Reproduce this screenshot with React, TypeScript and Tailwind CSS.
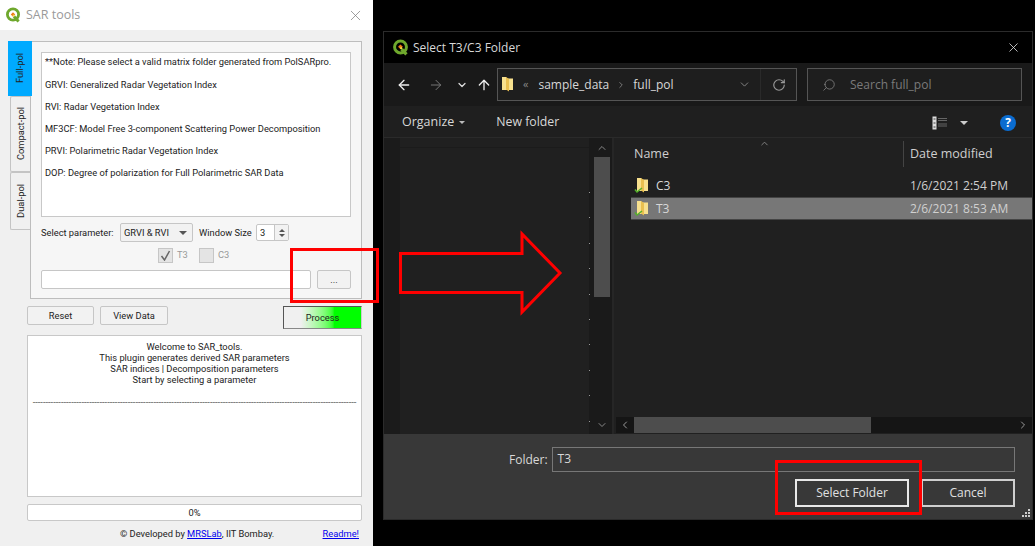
import React from 'react';
import { ArrowLeft, ArrowRight, ArrowUp, ChevronDown, ChevronLeft, ChevronRight, ChevronUp, RotateCw, Search, X } from 'lucide-react';

const QgisLogo = ({ size }: { size: number }) => (
  <svg width={size} height={size} viewBox="0 0 16 16" className="shrink-0">
    <circle cx="8" cy="7.5" r="5.6" fill="none" stroke="#6fa82d" strokeWidth="2.8" />
    <path d="M9 9.5l4.6 5" stroke="#6fa82d" strokeWidth="3" />
    <rect x="6.4" y="5.8" width="3.2" height="3.2" fill="#ee7913" transform="rotate(45 8 7.4)" />
    <circle cx="8.6" cy="8.6" r="1" fill="#f4d84a" />
  </svg>
);

const FolderIcon = ({ check }: { check?: boolean }) => (
  <svg width="16" height="17" viewBox="0 0 16 17" className="shrink-0">
    <path d="M3 1h4l1 1.500h6v11.500h-11z" fill="#f7e08e" />
    <path d="M7 1l3 2v12.500l-3 -2z" fill="#e9bf50" />
    {check && <path d="M1 12.500l2 2.500l5 -4" fill="none" stroke="#55b02c" strokeWidth="1.600" />}
  </svg>
);

const TabItem = ({ label, h, active }: { label: string; h: string; active?: boolean }) => (
  <div
    className={
      active
        ? `${h} relative z-10 w-[24px] bg-[#00aaff] flex items-center justify-center`
        : `${h} ml-[2px] w-[20px] bg-[#f0f0f0] border border-r-0 border-[#c4c4c4] rounded-l-[2px] flex items-center justify-center`
    }
  >
    <span className="[writing-mode:vertical-rl] rotate-180 text-[9.300px] text-[#222]">{label}</span>
  </div>
);

const QtButton = ({ label, w }: { label: string; w: string }) => (
  <button className={`${w} h-[19px] bg-[#f2f2f2] border border-[#c6c6c6] rounded-[2px] text-[9.300px] text-[#222] leading-none`}>
    {label}
  </button>
);

const notes = [
  '**Note: Please select a valid matrix folder generated from PolSARpro.',
  'GRVI: Generalized Radar Vegetation Index',
  'RVI: Radar Vegetation Index',
  'MF3CF: Model Free 3-component Scattering Power Decomposition',
  'PRVI: Polarimetric Radar Vegetation Index',
  'DOP: Degree of polarization for Full Polarimetric SAR Data',
];

const SarPanel = () => (
  <div className="w-[373px] h-[546px] shrink-0 bg-[#f0f0f0] flex flex-col font-['Roboto',sans-serif]">
    <div className="h-[30px] bg-white flex items-center pl-[5px] pr-[9px] font-['Open_Sans',sans-serif]">
      <QgisLogo size={16} />
      <span className="ml-[5px] text-[12.500px] text-[#9a9a9a]">SAR tools</span>
      <X size={17} strokeWidth={1} className="ml-auto text-[#777]" />
    </div>

    <div className="flex pl-[8px] pt-[11px]">
      <div className="flex flex-col w-[22px]">
        <TabItem label="Full-pol" h="h-[55px]" active />
        <TabItem label="Compact-pol" h="h-[76px]" />
        <TabItem label="Dual-pol" h="h-[58px]" />
      </div>
      <div className="w-[332px] h-[258px] bg-[#f6f6f6] border border-[#bdbdbd] px-[10px] pt-[10px]">
        <div className="h-[165px] bg-white border border-[#c8c8c8] px-[3px] text-[9.300px] text-[#222] leading-[22px]">
          <div className="-mt-[2px]">
            {notes.map((n) => (
              <div key={n} className="whitespace-nowrap first:pb-[1px]">{n}</div>
            ))}
          </div>
        </div>
        <div className="flex items-center mt-[6px] h-[19px] text-[9.300px] text-[#222]">
          <span className="w-[79px] whitespace-nowrap">Select parameter:</span>
          <div className="w-[73px] h-[19px] bg-[#f2f2f2] border border-[#c6c6c6] rounded-[2px] flex items-center pl-[3px]">
            <span>GRVI &amp; RVI</span>
            <span className="ml-auto mr-[5px] w-0 h-0 border-x-[4px] border-x-transparent border-t-[4px] border-t-[#555]" />
          </div>
          <span className="ml-[6px]">Window Size</span>
          <div className="ml-auto mr-[62px] w-[33px] h-[17px] bg-white border border-[#c6c6c6] rounded-[2px] flex items-center pl-[3px]">
            <span className="flex-1">3</span>
            <div className="w-[14px] h-full border-l border-[#c6c6c6] bg-[#f2f2f2] flex flex-col items-center justify-center gap-[2px]">
              <span className="w-0 h-0 border-x-[3px] border-x-transparent border-b-[3px] border-b-[#555]" />
              <span className="w-0 h-0 border-x-[3px] border-x-transparent border-t-[3px] border-t-[#555]" />
            </div>
          </div>
        </div>
        <div className="flex items-center mt-[5px] h-[16px] pl-[117px] text-[9.300px] text-[#999]">
          <span className="w-[15px] h-[15px] bg-[#e4e4e4] border border-[#c6c6c6] flex items-center justify-center">
            <svg width="11" height="11" viewBox="0 0 11 11">
              <path d="M1.500 6l3 4l5 -9" fill="none" stroke="#666" strokeWidth="1.500" />
            </svg>
          </span>
          <span className="ml-[4px] w-[22px]">T3</span>
          <span className="w-[15px] h-[15px] bg-[#e4e4e4] border border-[#c6c6c6]" />
          <span className="ml-[4px]">C3</span>
        </div>
        <div className="flex items-center mt-[7px] gap-[6px]">
          <div className="w-[270px] h-[19px] bg-white border border-[#c6c6c6] rounded-[2px]" />
          <QtButton label="..." w="w-[34px]" />
        </div>
      </div>
    </div>

    <div className="flex items-start mt-[7px] pl-[27px] gap-[6px]">
      <QtButton label="Reset" w="w-[67px]" />
      <QtButton label="View Data" w="w-[68px]" />
      <button className="ml-[109px] w-[79px] h-[23px] border border-[#555] border-r-[#ccc] border-b-[#888] bg-gradient-to-r from-[#f0f0f0] from-[22%] to-[#00ff00] to-[65%] text-[9.300px] text-[#222] leading-none">
        Process
      </button>
    </div>

    <div className="ml-[27px] mt-[6px] w-[335px] h-[162px] bg-white border border-[#c8c8c8] pt-[5px] text-[9.300px] text-[#222] leading-[11px] text-center overflow-hidden">
      <div>Welcome to SAR_tools.</div>
      <div>This plugin generates derived SAR parameters</div>
      <div>SAR indices | Decomposition parameters</div>
      <div>Start by selecting a parameter</div>
      <div className="mt-[11px] whitespace-nowrap text-[#555]">
        {'-'.repeat(126)}
      </div>
    </div>

    <div className="ml-[27px] mt-[7px] w-[335px] h-[17px] bg-white border border-[#c8c8c8] rounded-[2px] flex items-center justify-center text-[9.300px] text-[#222]">
      0%
    </div>

    <div className="mt-[5px] h-[16px] text-[9.300px] text-[#222] pl-[120px] flex items-center">
      <span>© Developed by <span className="text-[#0000ee] underline">MRSLab</span>, IIT Bombay.</span>
      <span className="ml-auto mr-[14px] text-[#0000ee] underline">Readme!</span>
    </div>
  </div>
);

const FileRow = ({ name, date, selected }: { name: string; date: string; selected?: boolean }) => (
  <div className={`h-[23px] flex items-center ${selected ? 'bg-[#777] border-y border-[#444]' : ''}`}>
    <div className="w-[279px] pl-[3px] flex items-center gap-[6px]">
      <FolderIcon check />
      <span className="text-[12px] text-[#d8d8d8]">{name}</span>
    </div>
    <span className={`text-[12px] ${selected ? 'text-[#d0d0d0]' : 'text-[#cfcfcf]'}`}>{date}</span>
  </div>
);

const treeDots = [0, 1, 2, 3, 4, 5, 6, 7, 8, 9];

const FolderDialog = () => (
  <div className="w-[650px] h-[489px] bg-[#202020] border border-[#2b2b2b] flex flex-col">
    {/* title bar */}
    <div className="h-[31px] bg-black flex items-center pl-[8px] pr-[11px]">
      <QgisLogo size={17} />
      <span className="ml-[4px] text-[12px] text-[#d8d8d8]">Select T3/C3 Folder</span>
      <X size={15} strokeWidth={1.300} className="ml-auto text-[#e0e0e0]" />
    </div>

    {/* address row */}
    <div className="h-[43px] bg-[#191919] flex items-center">
      <ArrowLeft size={16} strokeWidth={2} className="ml-[12px] text-[#eee]" />
      <ArrowRight size={16} strokeWidth={1.500} className="ml-[16px] text-[#777]" />
      <ChevronDown size={12} strokeWidth={2.500} className="ml-[12px] text-[#ddd]" />
      <ArrowUp size={16} strokeWidth={2} className="ml-[8px] text-[#eee]" />
      <div className="ml-[5px] w-[300px] h-[33px] border border-[#555] bg-[#1e1e1e] flex items-center pl-[1px]">
        <FolderIcon />
        <span className="ml-[8px] text-[11px] text-[#888]">«</span>
        <span className="ml-[10px] text-[12px] text-[#d8d8d8]">sample_data</span>
        <ChevronRight size={10} className="ml-[7px] text-[#888]" />
        <span className="ml-[7px] text-[12px] text-[#d8d8d8]">full_pol</span>
        <ChevronDown size={13} strokeWidth={1.500} className="ml-auto mr-[2px] text-[#999]" />
        <div className="w-[36px] h-full ml-[7px] border-l border-[#2a2a2a] flex items-center justify-center">
          <RotateCw size={14} className="text-[#999]" />
        </div>
      </div>
      <div className="ml-[10px] w-[215px] h-[33px] border border-[#555] bg-[#1e1e1e] flex items-center pl-[14px]">
        <Search size={14} strokeWidth={1.300} className="-scale-x-100 text-[#888]" />
        <span className="ml-[14px] text-[12px] text-[#7a7a7a]">Search full_pol</span>
      </div>
    </div>

    {/* toolbar */}
    <div className="h-[32px] bg-[#1f1f1f] border-b border-[#2a2a2a] flex items-center pt-[2px] pl-[18px] pr-[16px] text-[12px] text-[#d8d8d8]">
      <span className="text-[12.500px]">Organize</span>
      <span className="ml-[5px] w-0 h-0 border-x-[3px] border-x-transparent border-t-[3px] border-t-[#bbb]" />
      <span className="ml-[31px] text-[12.300px]">New folder</span>
      <svg width="16" height="14" viewBox="0 0 16 14" className="ml-auto">
        <rect x="0.500" y="0.500" width="4" height="13" fill="#ddd" />
        <path d="M1.500 3h2M1.500 7h2M1.500 11h2" stroke="#444" />
        <path d="M6 2.500h9M6 4.500h9M6 8h9M6 10h9" stroke="#666" />
      </svg>
      <span className="ml-[12px] w-0 h-0 border-x-[4px] border-x-transparent border-t-[4px] border-t-[#ccc]" />
      <span className="ml-[32px] w-[16px] h-[16px] rounded-full bg-[#0a6cd0] text-white text-[12px] font-bold flex items-center justify-center leading-none">?</span>
    </div>

    {/* panes */}
    <div className="h-[296px] flex">
      <div className="w-[230px] flex">
        <div className="w-[16px] bg-[#1b1b1b]" />
        <div className="w-[189px] bg-[#202020] mt-[9px] border-t border-[#1b1b1b]" />
        <div className="w-[1px] bg-[#1a1a1a] pt-[54px] flex flex-col gap-[24.400px]">
          {treeDots.map((d) => (
            <span key={d} className="w-[1px] h-[1px] bg-[#999]" />
          ))}
        </div>
        <div className="w-[22px] bg-[#1a1a1a] pl-[4px] flex flex-col items-start">
          <ChevronUp size={12} className="ml-[2px] mt-[4px] text-[#888]" />
          <div className="w-[16px] h-[140px] mt-[3px] bg-[#4d4d4d]" />
          <ChevronDown size={12} className="ml-[2px] mt-auto mb-[3px] text-[#888]" />
        </div>
        <div className="w-[2px] bg-[#262626]" />
      </div>
      <div className="flex-1 flex flex-col pl-[17px]">
        <div className="h-[30px] flex items-center relative pt-[2px]">
          <span className="pl-[3px] w-[272px] text-[12.500px] text-[#cfcfcf]">Name</span>
          <div className="w-px h-[26px] bg-[#444]" />
          <span className="ml-[6px] text-[12.500px] text-[#cfcfcf]">Date modified</span>
          <ChevronUp size={11} className="absolute left-[128px] top-0 text-[#888]" />
        </div>
        <div className="mt-[6px]">
          <FileRow name="C3" date="1/6/2021 2:54 PM" />
          <FileRow name="T3" date="2/6/2021 8:53 AM" selected />
        </div>
        <div className="mt-auto -ml-[15px] h-[16px] mb-[1px] flex items-center bg-[#151515]">
          <div className="w-[18px] flex justify-center">
            <ChevronLeft size={12} className="text-[#999]" />
          </div>
          <div className="w-[237px] h-full bg-[#4d4d4d]" />
          <ChevronRight size={12} className="ml-auto mr-[3px] text-[#999]" />
        </div>
      </div>
    </div>

    {/* footer */}
    <div className="relative flex-1 bg-[#383838] flex flex-col items-end pr-[17px] pt-[13px]">
      <div className="flex items-center w-full pl-[125px]">
        <span className="text-[12px] text-[#d8d8d8]">Folder:</span>
        <div className="ml-[4px] flex-1 h-[25px] border border-[#777] pl-[5px] text-[12px] text-[#d8d8d8] leading-[22px]">T3</div>
      </div>
      <div className="flex mt-[7px] gap-[12px]">
        <button className="w-[114px] h-[28px] border-2 border-[#e8e8e8] text-[12px] text-[#e0e0e0]">Select Folder</button>
        <button className="w-[94px] h-[28px] border-2 border-[#cfcfcf] text-[12px] text-[#e0e0e0]">Cancel</button>
      </div>
      <svg width="10" height="10" viewBox="0 0 10 10" className="absolute right-[1px] bottom-[1px]">
        <path d="M7 1h2v2h-2zM4 4h2v2h-2zM7 4h2v2h-2zM1 7h2v2h-2zM4 7h2v2h-2zM7 7h2v2h-2z" fill="#ccc" />
      </svg>
    </div>
  </div>
);

export default function App() {
  return (
    <div className="relative w-[1035px] h-[546px] bg-black overflow-hidden flex font-['Open_Sans','Noto_Sans',sans-serif]">
      <SarPanel />
      <div className="pl-[10px] pt-[31px]">
        <FolderDialog />
      </div>

      {/* annotations drawn over the screenshot */}
      <div className="absolute left-[290px] top-[248px] w-[89px] h-[55px] border-[3px] border-[#ff0000]" />
      <div className="absolute left-[775px] top-[460px] w-[147px] h-[55px] border-[3px] border-[#ff0000]" />
      <svg width="170" height="90" viewBox="0 0 170 90" className="absolute left-[398px] top-[228px]">
        <path d="M2.500 25.500h121.500v-19.500l38 39l-38 39v-19.500h-121.500z" fill="none" stroke="#ff0000" strokeWidth="3" />
      </svg>
    </div>
  );
}
